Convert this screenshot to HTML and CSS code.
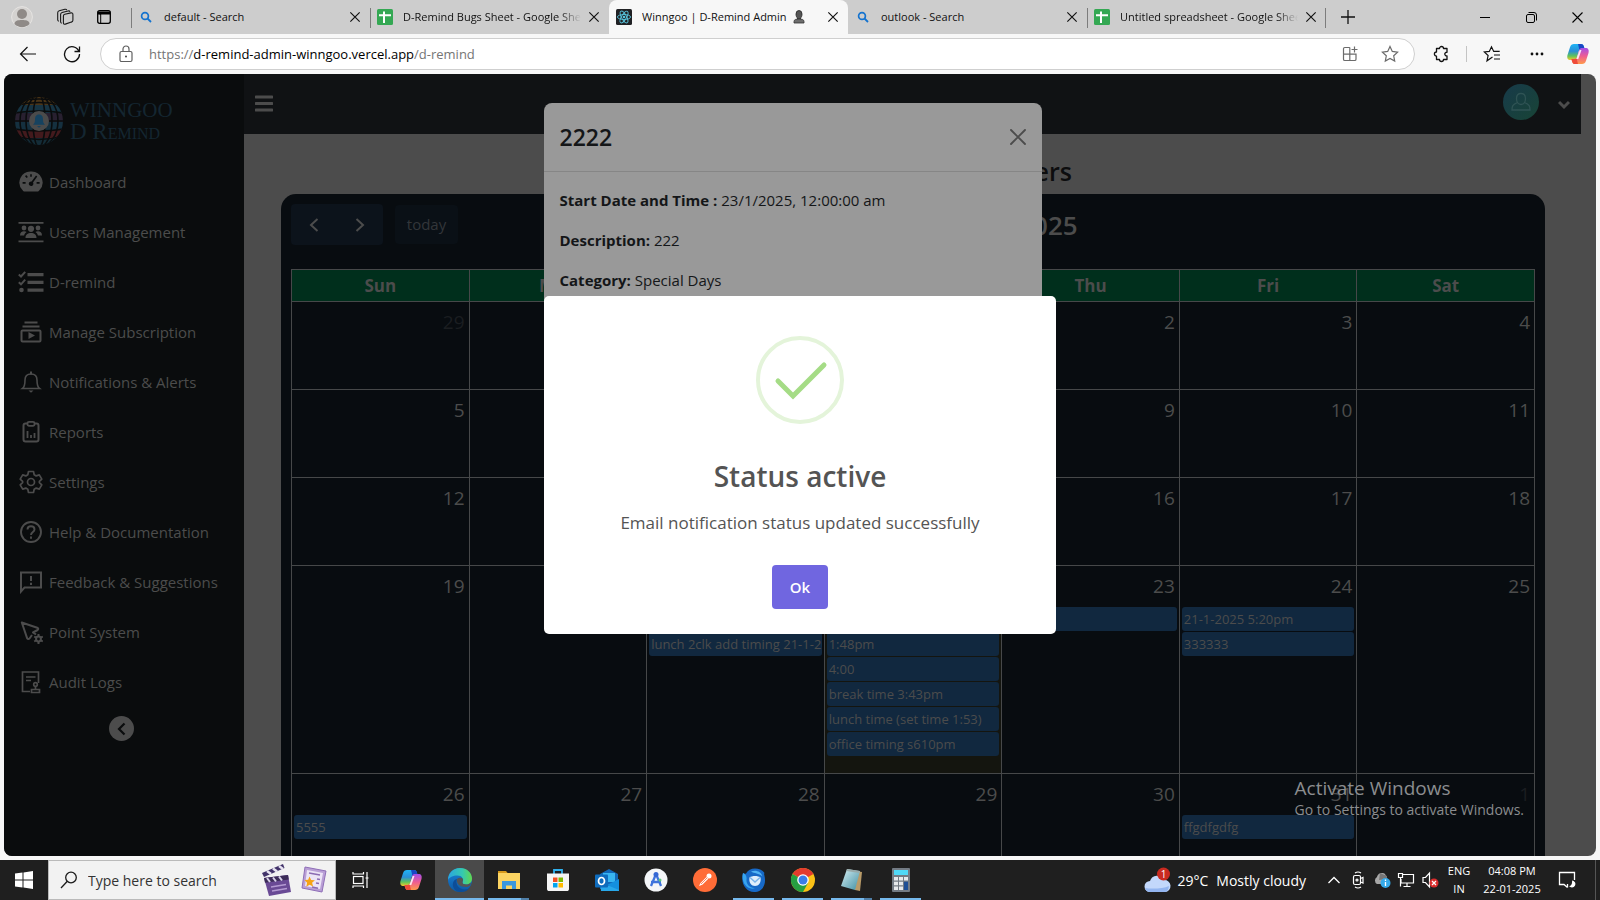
FILE: index.html
```html
<!DOCTYPE html>
<html lang="en">
<head>
<meta charset="utf-8">
<title>Winngoo | D-Remind Admin</title>
<link rel="stylesheet" href="styles.css">
</head>
<body>
<svg class="defs" aria-hidden="true">
  <defs>
    <linearGradient id="cpA" x1="0" y1="0" x2="0" y2="1"><stop offset="0" stop-color="#1fb4f5"/><stop offset=".45" stop-color="#2a8fd6"/><stop offset=".75" stop-color="#5fc35a"/><stop offset="1" stop-color="#f3c82c"/></linearGradient>
    <linearGradient id="cpB" x1="0" y1="0" x2="0" y2="1"><stop offset="0" stop-color="#a24ee8"/><stop offset=".5" stop-color="#ee5c93"/><stop offset="1" stop-color="#ff9a4a"/></linearGradient>
    <linearGradient id="edA" x1="0" y1="0" x2="1" y2="0"><stop offset="0" stop-color="#2aa5e0"/><stop offset=".6" stop-color="#35c9b0"/><stop offset="1" stop-color="#62d84e"/></linearGradient>
    <linearGradient id="edB" x1="0" y1="0" x2="0" y2="1"><stop offset="0" stop-color="#1b83d8"/><stop offset="1" stop-color="#0c59a4"/></linearGradient>
    <linearGradient id="avG" x1="0" y1="0" x2="1" y2="1"><stop offset="0" stop-color="#173a4a"/><stop offset="1" stop-color="#184436"/></linearGradient>
    <linearGradient id="npG" x1="0" y1="0" x2="1" y2="1"><stop offset="0" stop-color="#d8f0f4"/><stop offset="1" stop-color="#3f8fa3"/></linearGradient>
    <symbol id="x" viewBox="0 0 12 12"><path d="M2 2l8 8M10 2l-8 8" fill="none" stroke="currentColor" stroke-width="1"/></symbol>
    <symbol id="lens" viewBox="0 0 12 12"><circle cx="5" cy="5" r="3.4" fill="none" stroke="#1473cf" stroke-width="1.7"/><path d="M7.5 7.5L11 11" stroke="#1473cf" stroke-width="1.8"/></symbol>
    <symbol id="sheet" viewBox="0 0 16 16"><rect width="16" height="16" rx="1.5" fill="#34a853"/><path d="M2 6.2h12M7 2.5V14" stroke="#fff" stroke-width="2"/></symbol>
    <symbol id="copilot" viewBox="0 0 24 24">
      <path d="M8 2h7c1.500 0 2.300.8 2.800 2.300L18.600 7h-3.200c-1.400 0-2.200.7-2.600 2l-1.800 6.500c-.6 1.900-1.500 2.500-3.500 2.500H4.500C1.700 18 .8 16 1.500 13L4 5.200C4.700 3 6 2 8 2z" fill="url(#cpA)"/>
      <path d="M15 2c1.500 0 2.300.8 2.800 2.300L18.600 7h-3.200c-1 0-1.600.3-2 .8L12 2z" fill="#1947c4"/>
      <path d="M16 22H9c-1.500 0-2.300-.8-2.800-2.300L5.400 17h3.200c1.400 0 2.200-.7 2.600-2L13 8.500C13.600 6.600 14.500 6 16.500 6h3c2.800 0 3.700 2 3 5L20 18.800C19.300 21 18 22 16 22z" fill="url(#cpB)"/>
      <path d="M9 22c-1.500 0-2.300-.8-2.800-2.300L5.400 17h3.200c1 0 1.600-.3 2-.8L12 22z" fill="#ee4b3a"/>
      <path d="M13.700 8h1.800l-3.200 9h-2z" fill="#fff" opacity=".85"/>
    </symbol>
  </defs>
</svg>

<header class="browser">
  <div class="tabs">
    <div class="strip-left">
      <svg width="22" height="22" viewBox="0 0 22 22"><circle cx="11" cy="11" r="10.400" fill="#d4d2d0" stroke="#e6e4e2"/><circle cx="11" cy="8" r="5" fill="#8f8a87"/><path d="M3.500 18c0-3.500 3.500-4 7.500-4s7.500.5 7.500 4a10.500 10.500 0 0 1-15 0z" fill="#8f8a87"/></svg>
      <svg width="18" height="18" viewBox="0 0 18 18" fill="none" stroke="#1a1a1a" stroke-width="1.100"><path d="M8.800 6.200l6.200-1.300c1.200-.2 1.900.3 1.900 1.500v5.800c0 1-.5 1.600-1.500 1.900l-6.100 2c-1.200.3-1.900-.2-1.900-1.300V8.100c0-1 .5-1.700 1.400-1.900z"/><path d="M5.800 15.200c-.8-.2-1.200-.7-1.200-1.500V6.500c0-1 .5-1.700 1.500-2l6-1.500c.9-.2 1.600 0 1.900.8M2.900 13.200c-.8-.2-1.200-.7-1.200-1.500V4.800c0-1 .5-1.700 1.500-2l5.700-1.500c.9-.2 1.600 0 1.900.8"/></svg>
      <svg width="16" height="16" viewBox="0 0 16 16"><rect x="1.700" y="1.700" width="12.600" height="12.600" rx="2" fill="none" stroke="#000" stroke-width="1.300"/><path d="M1.700 2.500h12.600v3H1.700zM1.700 5h3v1z" fill="#000"/><path d="M4.700 5v9" stroke="#000"/></svg>
    </div>
    <div class="tab"><svg class="fav" viewBox="-2 -2 16 16"><use href="#lens" width="12" height="12"/></svg><span>default - Search</span><button aria-label="Close tab"><svg><use href="#x"/></svg></button></div>
    <div class="tab"><svg class="fav"><use href="#sheet"/></svg><span class="fade">D-Remind Bugs Sheet - Google Sheets</span><button aria-label="Close tab"><svg><use href="#x"/></svg></button></div>
    <div class="tab active"><svg class="fav" viewBox="0 0 16 16"><rect width="16" height="16" rx="1.500" fill="#202124"/><g fill="none" stroke="#58c4dc" stroke-width=".9"><ellipse cx="8" cy="8" rx="6.600" ry="2.500"/><ellipse cx="8" cy="8" rx="6.600" ry="2.500" transform="rotate(60 8 8)"/><ellipse cx="8" cy="8" rx="6.600" ry="2.500" transform="rotate(120 8 8)"/></g><circle cx="8" cy="8" r="1.300" fill="#58c4dc"/></svg><span>Winngoo | D-Remind Admin <svg class="bust" viewBox="0 0 12 14"><path d="M3 4a3 3.500 0 0 1 6 0c0 2-.5 3-1.500 4v1h-3V8C3.500 7 3 6 3 4z" fill="#555" stroke="#222" stroke-width=".8"/><path d="M1 11.500C1 9.500 3 9 6 9s5 .5 5 2.500V13H1z" fill="#6d6d6d" stroke="#333" stroke-width=".8"/></svg></span><button aria-label="Close tab"><svg><use href="#x"/></svg></button></div>
    <div class="tab bare"><svg class="fav" viewBox="-2 -2 16 16"><use href="#lens" width="12" height="12"/></svg><span>outlook - Search</span><button aria-label="Close tab"><svg><use href="#x"/></svg></button></div>
    <div class="tab last"><svg class="fav"><use href="#sheet"/></svg><span class="fade">Untitled spreadsheet - Google Sheets</span><button aria-label="Close tab"><svg><use href="#x"/></svg></button></div>
    <button class="new" aria-label="New tab"><svg width="14" height="14" viewBox="0 0 14 14"><path d="M7 0v14M0 7h14" stroke="#111" stroke-width="1.300"/></svg></button>
    <div class="win">
      <button aria-label="Minimize"><svg width="10" height="10" viewBox="0 0 10 10"><path d="M0 5.500h10" stroke="#000"/></svg></button>
      <button aria-label="Restore"><svg width="11" height="11" viewBox="0 0 11 11" fill="none" stroke="#000"><rect x=".5" y="2.500" width="8" height="8" rx="1.500"/><path d="M2.500.5H8A2.500 2.500 0 0 1 10.500 3v5.500"/></svg></button>
      <button aria-label="Close"><svg width="11" height="11" viewBox="0 0 11 11"><path d="M.5.5l10 10M10.500.5l-10 10" stroke="#000" stroke-width="1.100"/></svg></button>
    </div>
  </div>
  <div class="toolbar">
    <button aria-label="Back"><svg width="18" height="18" viewBox="0 0 18 18"><path d="M17 9H1.500M8.500 2l-7 7 7 7" fill="none" stroke="#111" stroke-width="1.200"/></svg></button>
    <button aria-label="Refresh"><svg width="18" height="18" viewBox="0 0 18 18"><path d="M16 6.500A7.500 7.500 0 1 0 16.500 9M16.500 1.500v5h-5" fill="none" stroke="#111" stroke-width="1.300"/></svg></button>
    <label class="address">
      <svg width="16" height="18" viewBox="0 0 16 18"><rect x="2" y="6.500" width="12" height="10" rx="1.500" fill="none" stroke="#5f5f5f" stroke-width="1.200"/><path d="M5 6.500V4a3 3 0 0 1 6 0v2.500" fill="none" stroke="#5f5f5f" stroke-width="1.200"/><circle cx="8" cy="11.500" r="1" fill="#444"/></svg>
      <span class="url"><i>https://</i>d-remind-admin-winngoo.vercel.app<i>/d-remind</i></span>
      <svg width="16" height="16" viewBox="0 0 16 16" fill="none" stroke="#6b6b6b" stroke-width="1.200"><path d="M1.500 8.200h12.500v5c0 .8-.5 1.300-1.300 1.300H2.800c-.8 0-1.300-.5-1.300-1.300zM7.800 1.500v13M7.800 1.500H2.800c-.8 0-1.300.5-1.300 1.300v5.400M12.500.5v6M9.500 3.500h6"/></svg>
      <svg width="18" height="18" viewBox="0 0 18 18"><path d="M9 1.500l2.300 4.900 5.300.7-3.900 3.700 1 5.300L9 13.500l-4.700 2.600 1-5.300L1.400 7.100l5.300-.7z" fill="none" stroke="#6b6b6b" stroke-width="1.200"/></svg>
    </label>
    <button aria-label="Extensions"><svg width="18" height="18" viewBox="0 0 18 18"><path d="M6.500 3.500a2 2 0 0 1 4 0h3.500v3.800a1.800 1.800 0 1 0 0 3.500V14.500h-3.500a2 2 0 0 1-4 0H3.500v-3.300a2.100 2.100 0 0 1 0-4.200V3.500z" fill="none" stroke="#111" stroke-width="1.300" stroke-linejoin="round"/></svg></button>
    <i class="bar"></i>
    <button aria-label="Favorites"><svg width="18" height="18" viewBox="0 0 18 18" fill="none" stroke="#111" stroke-width="1.200"><path d="M9.500 12L4 15.800l1.100-5.300L1.300 7l5-.6L8.500 1.800l2.200 4.600h6M11 10h6M11 14h6"/></svg></button>
    <button aria-label="More"><svg width="16" height="4" viewBox="0 0 16 4" fill="#111"><circle cx="3" cy="2" r="1.400"/><circle cx="8" cy="2" r="1.400"/><circle cx="13" cy="2" r="1.400"/></svg></button>
    <button aria-label="Copilot"><svg width="24" height="24"><use href="#copilot"/></svg></button>
  </div>
</header>

<div class="viewport">
  <nav class="sidebar">
    <a class="brand" href="#">
      <svg width="50" height="50" viewBox="0 0 50 50">
        <clipPath id="gl"><circle cx="25" cy="25" r="24"/></clipPath>
        <g clip-path="url(#gl)"><path d="M0 0h50v9H0z" fill="#4a3417"/><path d="M0 9h50v8H0z" fill="#173443"/><path d="M0 17h50v9H0z" fill="#282030"/><path d="M0 26h50v8H0z" fill="#15303f"/><path d="M0 34h50v8H0z" fill="#431a1d"/><path d="M0 42h50v8H0z" fill="#142d38"/>
        <g fill="none" stroke="#0a0c0d" stroke-width="1.600"><path d="M0 10q25-7 50 0M0 17q25-4 50 0M0 25h50M0 33q25 4 50 0M0 40q25 7 50 0M4 5q21-4 42 0"/><ellipse cx="25" cy="25" rx="6" ry="26"/><ellipse cx="25" cy="25" rx="13" ry="26"/><ellipse cx="25" cy="25" rx="19" ry="26"/></g></g>
        <circle cx="25" cy="25" r="10" fill="#4b4b4b"/><path d="M25 18.500c-3.200 0-4 2.500-4 5 0 2.800-.6 4-2 5.200h12c-1.400-1.200-2-2.400-2-5.200 0-2.500-.8-5-4-5zM23 30h4l-2 1.800z" fill="#16425f"/>
      </svg>
      <span class="brand-text"><b>WINNGOO</b><b class="small">D Remind</b></span>
    </a>
    <a href="#"><svg viewBox="0 0 24 24"><path fill="currentColor" fill-rule="evenodd" d="M12 1.500A11 11 0 0 0 3.600 20.200c.5.800 1.200 1.300 2 1.300h12.800c.8 0 1.500-.5 2-1.300A11 11 0 0 0 12 1.500zM11.200 4.200h1.600v2.600h-1.600zM6 6.300l1.200-1.200 1.700 1.800-1.200 1.100zM3.600 12h3v1.700h-3zM17.600 12h3v1.700h-3zM17 5.500l1.300 1-4.300 6a2.300 2.300 0 1 1-1.400-1z"/></svg>Dashboard</a>
    <a href="#"><svg viewBox="1 0 24 24" class="wide" fill="currentColor"><path d="M.5 2h25v1.700H.5zM.5 20.500h25v1.700H.5z"/><circle cx="6" cy="8" r="2.400"/><circle cx="20" cy="8" r="2.400"/><circle cx="13" cy="8.800" r="3.100"/><path d="M2 15.500c0-3 1.600-4.300 4-4.300 1.200 0 2 .2 2.600.7-1.300.9-2.200 2-2.500 3.600zM24 15.500c0-3-1.600-4.300-4-4.300-1.200 0-2 .2-2.600.7 1.300.9 2.200 2 2.500 3.600zM7.500 18c0-3.500 2.200-5 5.500-5s5.500 1.500 5.500 5z"/></svg>Users Management</a>
    <a href="#"><svg class="wide" viewBox="1 0 24 24"><path fill="currentColor" d="M9.500 3h16v3.200h-16zM9.500 10.700h16v3.200h-16zM9.500 18.500h16v3.200h-16z"/><circle cx="3.500" cy="20" r="2.300" fill="currentColor"/><path d="M.8 4.500l2.200 2L7.200 1.800M.8 12.300l2.200 2 4.200-4.700" fill="none" stroke="currentColor" stroke-width="2"/></svg>D-remind</a>
    <a href="#"><svg viewBox="0 0 24 24"><path fill="currentColor" d="M5.500 1.500h13v2h-13zM3.500 5.500h17v2h-17zM9.500 12v7l6.500-3.500z"/><rect x="2.500" y="10.500" width="19" height="11" rx="1" fill="none" stroke="currentColor" stroke-width="2"/></svg>Manage Subscription</a>
    <a href="#"><svg viewBox="0 0 24 24"><path d="M3.500 18.500c2-1.500 2.500-4 2.500-8.500 0-4 2.500-6 6-6s6 2 6 6c0 4.500.5 7 2.500 8.500z" fill="none" stroke="currentColor" stroke-width="1.600"/><path d="M11 1.500h2v3h-2zM9.500 20.500h5l-2.500 2.300z" fill="currentColor"/></svg>Notifications &amp; Alerts</a>
    <a href="#"><svg viewBox="0 0 24 24"><rect x="4.500" y="3.500" width="15" height="18" rx="2" fill="none" stroke="currentColor" stroke-width="2"/><rect x="8.500" y="1.800" width="7" height="4" rx="1.500" fill="#0a0c0d" stroke="currentColor" stroke-width="1.800"/><path d="M8.500 18v-7M12 18v-3M15.500 18v-5" stroke="currentColor" stroke-width="1.800"/></svg>Reports</a>
    <a href="#"><svg viewBox="0 0 24 24" fill="none" stroke="currentColor" stroke-width="1.700" stroke-linejoin="round"><path d="M9.500 1.500h5l.7 3.200 2 1.200 3.100-1 2.500 4.200-2.400 2.200v1.400l2.400 2.200-2.500 4.200-3.100-1-2 1.200-.7 3.200h-5l-.7-3.200-2-1.200-3.100 1-2.500-4.200 2.400-2.200v-1.400L1.200 9.100l2.500-4.200 3.100 1 2-1.200z"/><circle cx="12" cy="12" r="3.500"/></svg>Settings</a>
    <a href="#"><svg viewBox="0 0 24 24" fill="none" stroke="currentColor" stroke-width="1.900"><circle cx="12" cy="12" r="10"/><path d="M8.500 9.500c0-4.300 7-4.300 7 0 0 2.500-3.500 2.500-3.500 5.500M12 16.500v2.200"/></svg>Help &amp; Documentation</a>
    <a href="#"><svg viewBox="0 0 24 24" fill="none" stroke="currentColor" stroke-width="2"><path d="M2 21.500V2.500h20v15H5.500z"/><path d="M12 6v5M12 12.800v2.200"/></svg>Feedback &amp; Suggestions</a>
    <a href="#"><svg viewBox="0 0 24 24" fill="none" stroke="currentColor" stroke-width="2"><path d="M13 15l-2.500 3.500c-.8 1-2 .7-2.400-.4L2.800 2.500l15.400 5.200c1.200.5 1.400 1.600.4 2.300L14 12.500l3 2" stroke-linejoin="round"/><circle cx="19.500" cy="19" r="2.400"/><path d="M19.500 14v2.500M19.500 21.500V24M15.200 16.500l2 1.200M21.800 20.300l2 1.200M15.200 21.500l2-1.200M21.800 17.700l2-1.200"/></svg>Point System</a>
    <a href="#"><svg viewBox="0 0 24 24" fill="none" stroke="currentColor" stroke-width="1.700"><path d="M11 21.500H3.500V2h16v11M7 7h9.500M7 10.500h5"/><circle cx="16.500" cy="14.500" r="1.800"/><path d="M16.500 16.500v3M12.500 19.500h8v3h-8z"/></svg>Audit Logs</a>
    <button class="collapse" aria-label="Collapse sidebar"><svg width="12" height="14" viewBox="0 0 12 14"><path d="M8.500 1.500L3 7l5.500 5.500" fill="none" stroke="#0a0c0d" stroke-width="2.200"/></svg></button>
  </nav>

  <div class="main">
    <div class="topbar">
      <button aria-label="Menu"><svg width="18" height="18" viewBox="0 0 18 18"><path d="M1 2h16M1 8.500h16M1 15h16" stroke="#4c4c4c" stroke-width="3" stroke-linecap="round"/></svg></button>
      <div class="account">
        <svg width="36" height="36" viewBox="0 0 36 36"><circle cx="18" cy="18" r="18" fill="url(#avG)"/><path d="M14.500 18.500c-5 2-5.500 4-5.500 7.500h18c0-3.500-.5-5.500-5.500-7.500M18 9.500c-3 0-4.500 2-4.500 5s1.500 6 4.500 6 4.500-3 4.500-6-1.500-5-4.500-5z" fill="none" stroke="#2f5354" stroke-width="1.300"/></svg>
        <button aria-label="Account menu"><svg width="12" height="10" viewBox="0 0 12 10"><path d="M1 2l5 5 5-5" fill="none" stroke="#4c4c4c" stroke-width="3"/></svg></button>
      </div>
    </div>
    <h1>Event Calendar Reminders</h1>
    <section class="card">
      <div class="cal-bar">
        <div class="cal-nav">
          <div class="group"><button aria-label="Previous month"><svg width="10" height="14" viewBox="0 0 10 14"><path d="M8.500 1L2 7l6.500 6" /></svg></button><button aria-label="Next month"><svg width="10" height="14" viewBox="0 0 10 14"><path d="M1.500 1L8 7l-6.500 6"/></svg></button></div>
          <button class="today-btn" disabled>today</button>
        </div>
        <h2>January 2025</h2>
        <div></div>
      </div>
      <table>
        <thead><tr><th>Sun</th><th>Mon</th><th>Tue</th><th>Wed</th><th>Thu</th><th>Fri</th><th>Sat</th></tr></thead>
        <tbody>
          <tr><td class="other"><p>29</p></td><td class="other"><p>30</p></td><td class="other"><p>31</p></td><td><p>1</p></td><td><p>2</p></td><td><p>3</p></td><td><p>4</p></td></tr>
          <tr><td><p>5</p></td><td><p>6</p></td><td><p>7</p></td><td><p>8</p></td><td><p>9</p></td><td><p>10</p></td><td><p>11</p></td></tr>
          <tr><td><p>12</p></td><td><p>13</p></td><td><p>14</p></td><td><p>15</p></td><td><p>16</p></td><td><p>17</p></td><td><p>18</p></td></tr>
          <tr><td><p>19</p></td><td><p>20</p></td>
            <td><p>21</p><a href="#">lunch</a><a href="#">lunch 2clk add timing 21-1-2025</a></td>
            <td class="today"><p>22</p><a href="#">1:45pm</a><a href="#">1:48pm</a><a href="#">4:00</a><a href="#">break time 3:43pm</a><a href="#">lunch time (set time 1:53)</a><a href="#">office timing s610pm</a></td>
            <td><p>23</p><a href="#">2222</a></td>
            <td><p>24</p><a href="#">21-1-2025 5:20pm</a><a href="#">333333</a></td><td><p>25</p></td></tr>
          <tr><td><p>26</p><a href="#">5555</a></td><td><p>27</p></td><td><p>28</p></td><td><p>29</p></td><td><p>30</p></td><td><p>31</p><a href="#">ffgdfgdfg</a></td><td class="other"><p>1</p></td></tr>
        </tbody>
      </table>
    </section>
  </div>

  <div class="layer detail-layer">
    <section class="detail">
      <header><h3>2222</h3><button aria-label="Close"><svg width="16" height="16" viewBox="0 0 16 16"><path d="M1 1l14 14M15 1L1 15" stroke="#4c4c4c" stroke-width="1.900" stroke-linecap="round"/></svg></button></header>
      <div class="detail-body">
        <p><strong>Start Date and Time :</strong> 23/1/2025, 12:00:00 am</p>
        <p><strong>Description:</strong> 222</p>
        <p><strong>Category:</strong> Special Days</p>
      </div>
    </section>
  </div>
  <div class="layer alert-layer">
    <section class="alert" role="alertdialog" aria-labelledby="alert-title">
      <svg width="88" height="88" viewBox="0 0 88 88" fill="none"><circle cx="44" cy="44" r="42" stroke="#e4f4da" stroke-width="4"/><path d="M22 45l15 15 31-31" stroke="#a5dc86" stroke-width="5" stroke-linecap="round"/></svg>
      <h2 id="alert-title">Status active</h2>
      <p>Email notification status updated successfully</p>
      <button>Ok</button>
    </section>
  </div>
  <div class="watermark"><p class="big">Activate Windows</p><p>Go to Settings to activate Windows.</p></div>
</div>

<footer class="taskbar">
  <button class="start" aria-label="Start"><svg width="18" height="18" viewBox="0 0 18 18" fill="#fff"><path d="M0 2.600l7.500-1.100v7H0zM8.500 1.400L18 0v8.500H8.500zM0 9.500h7.500v7L0 15.400zM8.500 9.500H18V18l-9.500-1.400z"/></svg></button>
  <label class="search">
    <svg width="18" height="18" viewBox="0 0 18 18" fill="none" stroke="#1b1b1b" stroke-width="1.300"><circle cx="11" cy="6.500" r="5.300"/><path d="M7.300 10.300L1 17"/></svg>
    <input type="text" placeholder="Type here to search" aria-label="Type here to search">
    <svg width="32" height="34" viewBox="0 0 32 34"><path d="M3 15l24-3 3 17-22 4z" fill="#6a4a95"/><path d="M3 15l24-3 .8 4.500L4 19.700z" fill="#3c2c58"/><path d="M6 15l3 4M12 14.500l3 4M18 13.500l3 4" stroke="#d9d2ea" stroke-width="2"/><path d="M1 10L22 1l1.500 4L3 14z" fill="#42336a"/><path d="M6 8l4 3M12 5.500l4 3M18 3l4 3" stroke="#e8e4f2" stroke-width="2.500"/><path d="M10 24l15-2.500M11 28l15-2.500" stroke="#b49ad2" stroke-width="1.500"/></svg>
    <svg width="28" height="28" viewBox="0 0 28 28"><path d="M5 1l21 4-4 21-20-4z" fill="#b99fd6" stroke="#8f6fb8"/><path d="M7 4l16 3-3 16-15-3z" fill="#ece4f6"/><path d="M9 7l11 2M17 13l3 .6M16 17l3 .6M12 21l6 1.200" stroke="#8b6bb3" stroke-width="1.500"/><path d="M9.500 10.500l1.600 3.500 3.800.2-2.800 2.600 1 3.800-3.500-1.900-3.300 2 .8-3.900L4.500 14l3.700-.3z" fill="#f6a316"/></svg>
  </label>
  <button class="view" aria-label="Task view"><svg width="17" height="18" viewBox="0 0 17 18" fill="none" stroke="#fff" stroke-width="1.200"><rect x="1.500" y="5.500" width="9.500" height="7"/><path d="M1 1v2h10.500V1M1 17v-2h10.500v2M15 1v16M13.500 7h3"/></svg></button>
  <div class="apps">
    <button aria-label="Copilot"><svg><use href="#copilot"/></svg></button>
    <button class="on" aria-label="Edge"><svg viewBox="0 0 24 24"><circle cx="12" cy="12" r="12" fill="url(#edB)"/><path d="M0 12C0 5 5 0 12 0s12 5 12 10.500c0 4-3 6-6 6-2.500 0-4-1-3.500-2.300C16 11 14 7.500 9.500 7.500 5 7.500 1 9.500 0 12z" fill="url(#edA)"/><path d="M9 11c-2 5 1.500 10.500 8 10.500 2 0 4-1 5-2-2 3-5.500 4.500-9 4.500C7 24 4 19 5 15c.6-2.300 2-3.500 4-4z" fill="#0d4d97"/><path d="M9 11c2-2 5-1.500 6 0 .4 1.300-.5 2-.5 3.200 0 1.300 1.500 2.300 3.500 2.300 2 0 3.500-.6 4.600-1.800.6 1.700-1.200 4.300-4.600 4.300C12 19 8 16 9 11z" fill="#555"/></svg></button>
    <button class="run multi" aria-label="File Explorer"><svg viewBox="0 0 24 24"><path d="M1 3h8l2 2.500H1z" fill="#d89a1c"/><path d="M1 5h22v16H1z" fill="#fcd462"/><path d="M5 21v-8h14v8h-4v-3.500H9V21z" fill="#3b97dd"/></svg></button>
    <button aria-label="Microsoft Store"><svg viewBox="0 0 24 24"><path d="M8 6V2h8v4" fill="none" stroke="#2fb1ee" stroke-width="1.800"/><path d="M1 5.500h22V21c0 1.500-1 2-2 2H3c-1 0-2-.5-2-2z" fill="#f5f5f5"/><path d="M7 9.500h4.500V14H7z" fill="#f25022"/><path d="M12.500 9.500H17V14h-4.500z" fill="#7fba00"/><path d="M7 15h4.500v4.500H7z" fill="#00a4ef"/><path d="M12.500 15H17v4.500h-4.500z" fill="#ffb900"/></svg></button>
    <button aria-label="Outlook"><svg viewBox="0 0 24 24"><path d="M5 6l9-5 9 5v15H5z" fill="#1268b9"/><path d="M8 5h12v9H8z" fill="#38b5f1"/><path d="M5 14l9 4 10-6v11H6z" fill="#28a8ea"/><path d="M24 11v11L12 17z" fill="#1490df"/><rect x="0" y="6.500" width="13" height="13" rx="1" fill="#0f6cbd"/><ellipse cx="6.500" cy="13" rx="3" ry="3.500" fill="none" stroke="#fff" stroke-width="1.700"/></svg></button>
    <button aria-label="Android Studio"><svg viewBox="0 0 24 24"><circle cx="12" cy="12" r="11.500" fill="#f4f6f8"/><path d="M12 6L7 18M12 6l5 12M7 14h10" stroke="#3f74dc" stroke-width="2.300" fill="none"/><circle cx="12" cy="6.500" r="2.500" fill="#3568d4"/><circle cx="16" cy="12" r="1.500" fill="#5bc97d"/></svg></button>
    <button aria-label="Postman"><svg viewBox="0 0 24 24"><circle cx="12" cy="12" r="12" fill="#ff6c37"/><path d="M6 18l1.500-3 6-6 1.800 1.800-6 6z" fill="#fff"/><circle cx="16" cy="8" r="2.500" fill="#fff"/><path d="M8 16l6.500-6.500" stroke="#ff6c37" stroke-width=".8"/></svg></button>
    <button class="run" aria-label="Thunderbird"><svg viewBox="0 0 24 24"><path d="M1 5c1 1 2 1 3 .5C6 2 9 .5 13 .5c4 0 8 2 9.500 4.500-.5.500-.5 1-.2 2C25 17 20 24 12 24 4 24-2 15 1 5z" fill="#1769c7"/><path d="M1 5c2.500 1 4 3 3.500 6.500C4 16 8 20.500 13 20c-6 3-14.500-4-12-15z" fill="#37a5ef"/><path d="M7.500 9.500C10 7.500 16 7.500 18.500 9.500c1 5-2 8.500-5.500 8.500s-6.500-3.500-5.500-8.500z" fill="#dfeefc"/><path d="M8 9.500l5 4.500 5-4.500" fill="none" stroke="#7bb4ea" stroke-width="1.500"/><path d="M9 3.500c5-2 10 0 11.500 5-4-3.500-8-3-11.500-5z" fill="#51b4f5"/></svg></button>
    <button class="run" aria-label="Chrome"><svg viewBox="0 0 24 24"><circle cx="12" cy="12" r="12" fill="#fbc116"/><path d="M12 12L1.600 6A12 12 0 0 1 22.400 6z" fill="#e33b2e"/><path d="M1.600 6A12 12 0 0 0 12 24l5-9-5-3z" fill="#269f42"/><circle cx="12" cy="12" r="5.800" fill="#fff"/><circle cx="12" cy="12" r="4.500" fill="#3a7de8"/></svg></button>
    <button class="run multi" aria-label="Notepad"><svg viewBox="0 0 24 24"><path d="M8 2l14 2-2 19-5-1z" fill="#b89a68"/><path d="M7 1l13 2-5 19L1 18z" fill="url(#npG)"/><path d="M7 1l13 2-.6 2L6.500 3z" fill="#9aa"/></svg></button>
    <button class="run" aria-label="Calculator"><svg viewBox="0 0 24 24"><rect x="3" width="18" height="24" rx="1" fill="#737b84"/><path d="M5 2h14v5H5z" fill="#50d9f7"/><path d="M5 9h4v3.500H5zM10 9h4v3.500h-4zM15 9h4v3.500h-4zM5 13.700h4v3.500H5zM10 13.700h4v3.500h-4zM5 18.400h4V22H5zM10 18.400h4V22h-4z" fill="#e6e9ec"/><path d="M15 13.700h4V22h-4z" fill="#1e4f96"/></svg></button>
  </div>
  <div class="tray">
    <div class="weather"><svg width="28" height="26" viewBox="0 0 28 26"><path d="M6 25a5.500 5.500 0 0 1 0-11 7.500 7.500 0 0 1 14-1 6 6 0 0 1 1 12z" fill="#c3d8fb"/><path d="M6 25a5.500 5.500 0 0 1-5-4c6 1 18 1 24-2-.5 4-2 6-4 6z" fill="#93b5f0"/><circle cx="19.500" cy="7" r="6.500" fill="#c92a20"/><text x="19.500" y="10.500" text-anchor="middle">1</text></svg><span>29°C</span><span>Mostly cloudy</span></div>
    <svg width="24" height="18" viewBox="0 0 24 18"><path d="M6.500 12L12 6.500 17.500 12" fill="none" stroke="#fff" stroke-width="1.300"/></svg>
    <svg width="24" height="18" viewBox="0 0 24 18" fill="none" stroke="#fff" stroke-width="1.200"><rect x="7.500" y="4.500" width="7" height="9" rx="1.500"/><path d="M14.500 7.500l2.500-1v5.500l-2.500-1M9 2q3-2 6 0M9 16q3 2 6 0"/><circle cx="11" cy="9" r="1"/></svg>
    <svg width="24" height="18" viewBox="0 0 24 18"><path d="M7 13a4 4 0 0 1 0-7 5 5 0 0 1 8-3l2 4-4 6z" fill="#a7a7a7"/><path d="M10 2l7 3v3l-8 1z" fill="#777"/><circle cx="15.500" cy="12" r="5" fill="#35a9e8"/><path d="M15.500 11v4M15.500 8.500v1.500" stroke="#fff" stroke-width="1.300"/></svg>
    <svg width="24" height="18" viewBox="0 0 24 18" fill="none" stroke="#fff" stroke-width="1.200"><path d="M9 3.500h10.500v8.500H7V8M13 12v3.500M9.500 15.500h7M4.500 2.500h4v4h-4zM6.500 6.500v9"/></svg>
    <svg width="24" height="18" viewBox="0 0 24 18"><path d="M5 6.500h2.500L11.500 2v14l-4-4.500H5z" fill="none" stroke="#fff" stroke-width="1.200"/><circle cx="16" cy="12" r="4.500" fill="#d92c2c"/><path d="M14 10l4 4M18 10l-4 4" stroke="#fff" stroke-width="1.200"/></svg>
    <div class="stack lang"><span>ENG</span><span>IN</span></div>
    <div class="stack clock"><span>04:08 PM</span><span>22-01-2025</span></div>
    <button class="notes" aria-label="Notifications"><svg width="18" height="18" viewBox="0 0 18 18" fill="none" stroke="#fff" stroke-width="1.300"><path d="M9.500 16.500L6 13.500H1.500v-12h15V9M9.500 16.500V13"/><path d="M14 9.500a3.500 3.500 0 1 1-3 5.500c2 .3 3.500-2 3-5.500z" fill="#fff" stroke="none"/></svg></button>
  </div>
</footer>
</body>
</html>
```
FILE: styles.css
```css
* { box-sizing: border-box; }
body {
  margin: 0;
  height: 100vh;
  display: flex;
  flex-direction: column;
  overflow: hidden;
  background: #f7f7f7;
  font-family: "Open Sans", "Noto Sans", sans-serif;
  color: #111;
}
button { font: inherit; color: inherit; background: none; border: 0; padding: 0; display: flex; align-items: center; justify-content: center; }
p, h1, h2, h3 { margin: 0; }
a { color: inherit; text-decoration: none; }
svg { flex: none; display: block; }
.defs { position: absolute; width: 0; height: 0; }

/* browser chrome */
.browser { flex: none; }
.tabs { display: flex; height: 34px; background: #cdcdcd; font-size: 11px; }
.strip-left { display: flex; align-items: center; justify-content: space-between; width: 131px; padding: 0 19px 0 11px; flex: none; }
.tab { display: flex; align-items: center; width: 239px; padding: 0 8px 0 7px; position: relative; }
.tab::before { content: ""; position: absolute; left: 0; top: 8px; width: 1px; height: 20px; background: #7c7c7c; }
.tab.active { background: #f7f7f7; border-radius: 8px 8px 0 0; }
.tab.active::before, .tab.bare::before { display: none; }
.tab.last::after { content: ""; position: absolute; right: 0; top: 8px; width: 1px; height: 20px; background: #7c7c7c; }
.fav { width: 16px; height: 16px; margin-right: 10px; }
.tab span { flex: 1; white-space: nowrap; overflow: hidden; line-height: 18px; }
.tab .fade { -webkit-mask-image: linear-gradient(to right, #000 88%, transparent); mask-image: linear-gradient(to right, #000 88%, transparent); }
.tab button { width: 14px; height: 14px; margin-left: 6px; }
.tab button svg { width: 14px; height: 14px; }
.bust { display: inline-block; width: 12px; height: 14px; margin-left: 4px; vertical-align: -3px; }
.new { width: 44px; }
.win { display: flex; margin-left: auto; }
.win button { width: 46px; }
.toolbar { display: flex; align-items: center; height: 40px; padding: 0 2px 0 6px; }
.toolbar > button { width: 44px; height: 32px; }
.toolbar > button:nth-of-type(3) { width: 48px; }
.bar { width: 1px; height: 16px; background: #c4c4c4; }
.toolbar > button:nth-of-type(4) { width: 49px; }
.toolbar > button:nth-of-type(5) { width: 42px; }
.toolbar > button:nth-of-type(6) { width: 40px; }
.address { flex: 1; display: flex; align-items: center; height: 32px; margin: 0 3px 0 6px; padding: 0 15px 0 17px; border: 1px solid #cfcfcf; border-radius: 16px; background: #fff; gap: 23px; }
.url { flex: 1; margin-left: -8px; font-size: 13px; color: #000; }
.url i { font-style: normal; color: #757575; }

/* page */
.viewport { flex: 1; min-height: 0; position: relative; display: flex; margin: 0 4px 4px; border-radius: 8px; overflow: hidden; background: #4c4c4c; color: #4c4c4c; }
.sidebar { width: 240px; flex: none; background: #0a0c0d; padding-top: 22px; font-size: 15px; }
.sidebar > a { display: flex; align-items: center; height: 50px; gap: 6px; padding-left: 15px; white-space: nowrap; }
.sidebar > a > svg { width: 24px; height: 24px; }
.sidebar > a > .wide { overflow: visible; }
.sidebar > .brand { gap: 6px; padding-left: 10px; margin-bottom: 11px; }
.sidebar > .brand > svg { width: 50px; height: 50px; }
.brand-text { display: flex; flex-direction: column; font-family: "Liberation Serif", serif; font-size: 21px; line-height: 21px; color: #142631; }
.brand-text b { font-weight: 400; }
.brand-text .small { font-variant: small-caps; font-size: 23px; }
.collapse { width: 25px; height: 25px; margin: 9px auto 0 105px; border-radius: 50%; background: #4c4c4c; }
.main { flex: 1; min-width: 0; display: flex; flex-direction: column; padding-right: 15px; }
.topbar { display: flex; align-items: center; justify-content: space-between; flex: none; height: 60px; background: #101214; padding: 0 11px; }
.account { display: flex; align-items: center; gap: 19px; padding-bottom: 4px; }
.account button { margin-top: 6px; }
.main h1 { flex: none; text-align: center; font-size: 25px; font-weight: 600; line-height: 30px; margin: 22px 0 8px; color: #0c0d0e; }
.card { flex: none; margin: 0 36px 0 37px; padding: 10px; border-radius: 15px; background: #080c10; }
.cal-bar { display: flex; align-items: center; justify-content: space-between; height: 41px; margin-bottom: 24px; }
.cal-nav { display: flex; align-items: center; gap: 12px; }
.group { display: flex; background: #0c131b; border-radius: 4px; }
.group button { width: 46px; height: 41px; }
.group path { fill: none; stroke: #4c4c4c; stroke-width: 2; }
.today-btn { width: 63px; height: 39px; padding-bottom: 2px; border-radius: 4px; background: #0a1016; color: #33363a; font-size: 15px; }
.cal-bar h2 { font-size: 26px; font-weight: 600; line-height: 36px; }
table { width: 100%; table-layout: fixed; border-collapse: collapse; }
th, td { border: 1px solid #464849; padding: 0; }
th { height: 32px; background: #002f1c; font-size: 17px; font-weight: 700; line-height: 24px; }
td { height: 88px; vertical-align: top; padding-bottom: 16px; }
td p { height: 41px; padding: 6px 4px 0 0; text-align: right; font-size: 19px; line-height: 28px; }
td.other p { color: #1b1e21; }
td.today { background: #14150f; }
td a { display: block; height: 24px; margin: 0 2px 1px; padding: 0 2px; border-radius: 3px; background: #11283f; font-size: 13px; line-height: 25px; white-space: nowrap; overflow: hidden; }

/* dialogs */
.layer { position: absolute; inset: 0; display: flex; justify-content: center; }
.detail-layer { align-items: flex-start; padding: 29px 15px 0 0; }
.detail { width: 498px; height: 400px; border-radius: 8px; background: #999; color: #141618; }
.detail header { display: flex; align-items: center; justify-content: space-between; height: 69px; padding: 0 16px; border-bottom: 1px solid #868686; }
.detail h3 { font-size: 23px; font-weight: 600; }
.detail-body { padding: 16px; font-size: 15px; line-height: 24px; }
.detail-body p { margin-bottom: 16px; }
.alert-layer { align-items: center; }
.alert { display: flex; flex-direction: column; align-items: center; width: 512px; height: 338px; padding-top: 40px; border-radius: 5px; background: #fff; color: #545454; }
.alert h2 { margin-top: 32px; font-size: 28px; font-weight: 600; line-height: 40px; }
.alert p { margin-top: 14px; font-size: 17px; line-height: 26px; }
.alert button { width: 56px; height: 44px; margin-top: 29px; border-radius: 4px; background: #7066e0; color: #fff; font-size: 15px; font-weight: 600; }
.watermark { position: absolute; right: 72px; bottom: 36px; color: #8b8d8f; font-size: 14px; line-height: 20px; }
.watermark .big { font-size: 19px; line-height: 24px; }

/* taskbar */
.taskbar { flex: none; display: flex; height: 40px; background: #1f1f1f; color: #fff; }
.start { width: 48px; }
.search { display: flex; align-items: center; width: 288px; padding: 0 7px 0 11px; border: 1px solid #bababa; background: #f2f2f2; }
.search input { flex: 1; min-width: 0; margin: 0 8px 0 10px; padding: 0; border: 0; background: none; font: 14px "Open Sans", sans-serif; }
.search input::placeholder { color: #333; opacity: 1; }
.search svg + svg { margin-left: 7px; }
.view { width: 49px; }
.apps { display: flex; margin-left: 1px; }
.apps button { width: 49px; position: relative; }
.apps svg { width: 24px; height: 24px; }
.apps .on { background: #4a4a4a; }
.apps .on::after, .apps .run::after { content: ""; position: absolute; left: 4px; right: 4px; bottom: 0; height: 2px; background: #76b9ed; }
.apps .on::after { left: 0; right: 0; }
.apps .multi::after { background: linear-gradient(to right, #76b9ed 80%, #4f7fa8 80%); }
.tray { display: flex; align-items: center; margin: 0 4px 0 auto; padding-right: 4px; border-right: 1px solid #555; font-size: 11px; }
.weather { display: flex; align-items: center; font-size: 14px; margin-right: 16px; gap: 8px; }
.weather svg { margin-right: -3px; }
.weather text { font-size: 10px; fill: #fff; }
.stack { display: flex; flex-direction: column; align-items: center; line-height: 18px; }
.lang { width: 34px; }
.clock { width: 72px; }
.notes { width: 48px; height: 40px; margin-left: -5px; }
```
